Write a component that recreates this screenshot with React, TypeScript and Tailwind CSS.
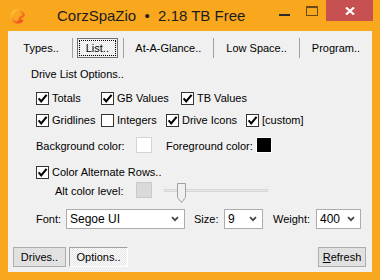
import React from "react";

const FONT = "font-['Liberation_Sans',Arial,sans-serif]";

function Check({ checked }: { checked: boolean }) {
  return (
    <span className="w-[13px] h-[13px] border border-[#333] bg-white flex items-center justify-center shrink-0">
      {checked && (
        <svg width="11" height="11" viewBox="0 0 11 11">
          <path d="M1.6 5.4 L4.2 8.4 L9.6 1.8" fill="none" stroke="#000" strokeWidth="2.1" />
        </svg>
      )}
    </span>
  );
}

function CheckItem({ label, checked, w }: { label: string; checked: boolean; w?: string }) {
  return (
    <div className={`flex items-center gap-[3px] ${w ?? ""}`}>
      <Check checked={checked} />
      <span className="leading-none">{label}</span>
    </div>
  );
}

function Select({ value, w }: { value: string; w: string }) {
  return (
    <div className={`${w} h-[20px] bg-white border border-[#acacac] flex items-center pl-[3px] pr-[5px]`}>
      <span className="flex-1 leading-none text-[12px]">{value}</span>
      <svg width="8" height="6" viewBox="0 0 8 6">
        <path d="M1 1.2 L4 4.2 L7 1.2" fill="none" stroke="#444" strokeWidth="1.7" />
      </svg>
    </div>
  );
}

const checker =
  "bg-[repeating-conic-gradient(#ffffff_0_25%,#e4e4e4_0_50%)] bg-[length:2px_2px]";

function Sep() {
  return <div className="w-px h-[20px] bg-[#a0a0a0] shrink-0" />;
}

export default function App() {
  return (
    <div className={`w-[380px] h-[280px] bg-[#f9a71c] overflow-hidden ${FONT} text-black`}>
      {/* title bar */}
      <div className="h-[31px] flex items-start">
        <div className="ml-[10px] mt-[9px]">
          <svg width="16" height="15" viewBox="0 0 16 15">
            <defs>
              <linearGradient id="g" x1="0" y1="0" x2="1" y2="1">
                <stop offset="0" stopColor="#ffd43a" />
                <stop offset="1" stopColor="#f03a16" />
              </linearGradient>
            </defs>
            <path
              d="M12.5 11 A6 6 0 1 1 13.6 6.5 L10.5 8.5 L8.5 13"
              fill="none"
              stroke="url(#g)"
              strokeWidth="2.6"
              strokeLinejoin="round"
            />
          </svg>
        </div>
        <span className="ml-[31px] mt-[8px] text-[15px] leading-none text-[#1c1c1c] whitespace-pre">
          CorzSpaZio  •  2.18 TB Free
        </span>
        <div className="ml-auto flex items-start">
          <div className="mt-[14px] w-[11px] h-[2px] bg-[#2b2b2b]" />
          <div className="ml-[16px] mt-[6px] w-[12px] h-[10px] border border-[#6b4a14] border-t-[2px]" />
          <div className="ml-[8px] w-[47px] h-[21px] bg-[#c75050] flex items-center justify-center">
            <svg width="10" height="8" viewBox="0 0 10 8">
              <path d="M1 0.5 L9 7.5 M9 0.5 L1 7.5" stroke="#fff" strokeWidth="2.2" />
            </svg>
          </div>
          <div className="w-[7px]" />
        </div>
      </div>

      {/* client area */}
      <div className="ml-[8px] w-[364px] h-[241px] bg-[#f0f0f0] flex flex-col text-[11px] overflow-hidden">
        {/* tabs */}
        <div className="mt-[7px] h-[20px] flex items-center">
          <div className="ml-[2px] w-[63px] text-center">Types..</div>
          <Sep />
          <div className={`ml-[4px] w-[41px] h-[20px] border border-[#707070] p-[1px] ${checker}`}>
            <div className="w-full h-full border border-dotted border-black flex items-center justify-center">
              List..
            </div>
          </div>
          <div className="w-[5px]" />
          <Sep />
          <div className="w-[91px] text-center">At-A-Glance..</div>
          <Sep />
          <div className="w-[86px] text-center">Low Space..</div>
          <Sep />
          <div className="w-[72px] shrink-0 text-center">Program..</div>
        </div>

        <div className="mt-[9px] h-[14px] pl-[23px] flex items-center">Drive List Options..</div>

        <div className="mt-[11px] pl-[28px] flex items-center h-[13px]">
          <CheckItem label="Totals" checked w="w-[65px]" />
          <CheckItem label="GB Values" checked w="w-[80px]" />
          <CheckItem label="TB Values" checked />
        </div>

        <div className="mt-[9px] pl-[28px] flex items-center h-[13px]">
          <CheckItem label="Gridlines" checked w="w-[65px]" />
          <CheckItem label="Integers" checked={false} w="w-[65px]" />
          <CheckItem label="Drive Icons" checked w="w-[80px]" />
          <CheckItem label="[custom]" checked />
        </div>

        <div className="mt-[10px] pl-[28px] flex items-center h-[16px]">
          <span className="w-[100px] pt-[2px]">Background color:</span>
          <div className="w-[16px] h-[16px] bg-white border border-[#d4d4d4]" />
          <span className="ml-[14px] w-[90px] pt-[2px]">Foreground color:</span>
          <div className="w-[16px] h-[16px] bg-black border border-white" />
        </div>

        <div className="mt-[13px] pl-[28px] flex items-center h-[13px]">
          <CheckItem label="Color Alternate Rows.." checked />
        </div>

        <div className="mt-[3px] pl-[47px] flex items-center h-[16px]">
          <span className="w-[81px] pt-[2px]">Alt color level:</span>
          <div className="w-[16px] h-[16px] bg-[#dadada] border border-[#cacaca]" />
          <div className="ml-[12px] w-[104px] h-[16px] relative">
            <div className="absolute left-0 right-0 top-[7px] h-[3px] bg-[#e7eaea] border border-[#d6d6d6]" />
            <svg className="absolute left-[13px] top-[1px]" width="10" height="21" viewBox="0 0 10 21">
              <path d="M0.5 0.5 H8.5 V14.5 L4.5 19.5 L0.5 14.5 Z" fill="#f0f0f0" stroke="#a0a0a0" />
            </svg>
          </div>
        </div>

        <div className="mt-[11px] pl-[28px] flex items-center h-[20px]">
          <span className="w-[30px]">Font:</span>
          <Select value="Segoe UI" w="w-[119px]" />
          <span className="ml-[9px] w-[30px]">Size:</span>
          <Select value="9" w="w-[39px]" />
          <span className="ml-[10px] w-[43px]">Weight:</span>
          <Select value="400" w="w-[45px]" />
        </div>

        <div className="mt-[18px] pl-[5px] flex items-center h-[20px]">
          <div className="w-[53px] h-[20px] bg-[#e1e1e1] border border-[#adadad] flex items-center justify-center">
            Drives..
          </div>
          <div
            className={`ml-[3px] w-[59px] h-[20px] border border-t-[#a0a0a0] border-l-[#a0a0a0] border-r-white border-b-white ${checker} flex items-center justify-center`}
          >
            Options..
          </div>
          <div className="ml-auto mr-[6px] w-[48px] h-[20px] bg-[#e1e1e1] border border-[#adadad] flex items-center justify-center">
            <span>
              <span className="underline">R</span>efresh
            </span>
          </div>
        </div>
      </div>
    </div>
  );
}
